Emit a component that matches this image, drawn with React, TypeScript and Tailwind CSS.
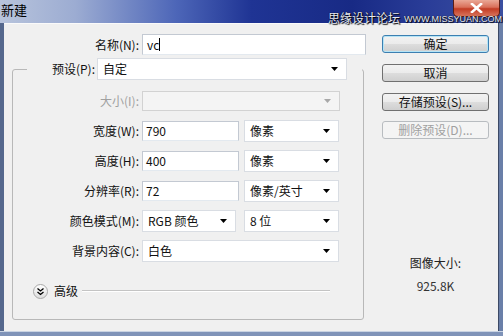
import React from "react";

const Arrow = ({ disabled }: { disabled?: boolean }) => (
  <svg width="7" height="4" viewBox="0 0 7 4">
    <path d="M0 0h7L3.5 4z" fill={disabled ? "#a8a8a8" : "#000"} />
  </svg>
);

const Select = ({ value, w, disabled }: { value?: string; w: string; disabled?: boolean }) => (
  <div
    className={`${w} ${disabled ? "h-[20px] bg-[#f4f4f4] border-[#d2d2d2]" : "h-[22px] bg-white border-[#d9dde3]"} border flex items-center justify-between pl-[5px] pr-[8px]`}
  >
    <span className="leading-none">{value}</span>
    <Arrow disabled={disabled} />
  </div>
);

const Input = ({ value, w }: { value: string; w: string }) => (
  <div className={`${w} h-[20px] bg-white border border-[#c3c9d2] border-b-[#e3e9ef] flex items-center pl-[3px]`}>
    <span className="leading-none">{value}</span>
  </div>
);

const Row = ({ label, disabled, children }: { label: string; disabled?: boolean; children: React.ReactNode }) => (
  <div className="h-[30px] flex items-center">
    <span className={`w-[126px] text-right ${disabled ? "text-[#a0a0a0]" : ""}`}>{label}</span>
    <div className="ml-[3px] flex items-center">{children}</div>
  </div>
);

const Button = ({ children, primary, disabled }: { children: React.ReactNode; primary?: boolean; disabled?: boolean }) => (
  <div
    className={`w-[107px] h-[18px] rounded-[3px] border flex items-center justify-center leading-none ${
      disabled
        ? "border-[#b8bcc0] bg-[#f4f4f4] text-[#a0a0a0]"
        : primary
        ? "border-[#3c7fb1] shadow-[inset_0_0_0_1px_#b5e4f6] bg-[linear-gradient(#f2f2f2_0%,#ebebeb_50%,#dddddd_51%,#cfcfcf_100%)]"
        : "border-[#707070] bg-[linear-gradient(#f2f2f2_0%,#ebebeb_50%,#dddddd_51%,#cfcfcf_100%)]"
    }`}
  >
    {children}
  </div>
);

export default function App() {
  return (
    <div className="w-[503px] h-[336px] overflow-hidden flex flex-col bg-[#5a6d92] text-[12px] text-[#111] font-['Noto_Sans_CJK_SC','Microsoft_YaHei',sans-serif]">
      {/* title bar */}
      <div className="relative h-[23px] shrink-0 flex justify-between items-start bg-[linear-gradient(90deg,#b8c4dc_0%,#9cacd2_15%,#4d66b8_35%,#1f3494_50%,#182a85_70%,#2a3d98_85%,#3b4fa0_100%)]">
        <span className="ml-[1px] mt-[3px] text-[13px] leading-none text-black">新建</span>
        <div className="mr-[3px] w-[47px] h-[17px] rounded-b-[5px] border border-t-0 border-[#5a1e16] bg-[#c9462e] [background-image:linear-gradient(#eaa896_0%,#d9705a_45%,#c23c24_55%,#d8735b_100%)] flex items-center justify-center">
          <svg width="13" height="10" viewBox="0 0 13 10">
            <path d="M2 1l9 8M11 1l-9 8" stroke="#fff" strokeWidth="2.6" strokeLinecap="square" />
          </svg>
        </div>
        <div className="absolute left-[328px] top-[12px] flex items-end gap-[4px] text-[#e8eaf2] [text-shadow:0_0_1px_#000,1px_1px_1px_#000]">
          <span className="text-[12px] leading-none">思缘设计论坛</span>
          <span className="text-[9px] leading-none font-['Liberation_Sans',sans-serif]">WWW.MISSYUAN.COM</span>
        </div>
      </div>

      <div className="flex-1 flex">
        <div className="w-[4px] shrink-0 bg-[#55688d]" />
        <div className="flex-1 flex bg-[#f0f0f0] border-t border-[#fafafa]">
          {/* left column */}
          <div className="w-[362px] pt-[10px]">
            <div className="flex items-center">
              <span className="w-[135px] text-right">名称(N):</span>
              <div className="ml-[3px]">
                <div className="w-[224px] h-[21px] bg-white border border-[#c3c9d2] border-b-[#e3e9ef] flex items-center pl-[4px]">
                  <span className="leading-none">vc</span>
                  <span className="w-px h-[13px] bg-black" />
                </div>
              </div>
            </div>

            <fieldset className="mt-[3px] ml-[8px] w-[352px] border border-[#b8b8b8] rounded-[3px] pb-[13px]">
              <legend className="ml-[14px]">
                <div className="flex items-center pr-[15px]">
                  <span className="w-[68px] text-right">预设(P):</span>
                  <div className="ml-[2px]">
                    <Select value="自定" w="w-[250px]" />
                  </div>
                </div>
              </legend>
              <div className="pt-[6px]">
                <Row label="大小(I):" disabled>
                  <Select w="w-[198px]" disabled />
                </Row>
                <Row label="宽度(W):">
                  <Input value="790" w="w-[97px]" />
                  <div className="ml-[5px]">
                    <Select value="像素" w="w-[95px]" />
                  </div>
                </Row>
                <Row label="高度(H):">
                  <Input value="400" w="w-[97px]" />
                  <div className="ml-[5px]">
                    <Select value="像素" w="w-[95px]" />
                  </div>
                </Row>
                <Row label="分辨率(R):">
                  <Input value="72" w="w-[97px]" />
                  <div className="ml-[5px]">
                    <Select value="像素/英寸" w="w-[95px]" />
                  </div>
                </Row>
                <Row label="颜色模式(M):">
                  <Select value="RGB 颜色" w="w-[94px]" />
                  <div className="ml-[8px]">
                    <Select value="8 位" w="w-[95px]" />
                  </div>
                </Row>
                <Row label="背景内容(C):">
                  <Select value="白色" w="w-[197px]" />
                </Row>
                <div className="mt-[10px] h-[30px] flex items-center">
                  <svg className="ml-[20px]" width="15" height="15" viewBox="0 0 15 15">
                    <defs>
                      <linearGradient id="adv" x1="0" y1="0" x2="0" y2="1">
                        <stop offset="0" stopColor="#ffffff" />
                        <stop offset="1" stopColor="#dcdcdc" />
                      </linearGradient>
                    </defs>
                    <circle cx="7.5" cy="7.5" r="7" fill="url(#adv)" stroke="#a9a9a9" />
                    <path d="M4.5 4.5l3 2.5 3-2.5M4.5 8l3 2.5 3-2.5" fill="none" stroke="#000" strokeWidth="1.3" />
                  </svg>
                  <span className="ml-[6px]">高级</span>
                  <div className="flex-1 ml-[4px] mr-[33px] h-[2px] border-t border-[#c4c4c4] border-b border-b-white" />
                </div>
              </div>
            </fieldset>
          </div>

          {/* right column */}
          <div className="ml-[16px] w-[107px] pt-[11px] flex flex-col">
            <Button primary>确定</Button>
            <div className="mt-[11px]">
              <Button>取消</Button>
            </div>
            <div className="mt-[11px]">
              <Button>存储预设(S)...</Button>
            </div>
            <div className="mt-[10px]">
              <Button disabled>删除预设(D)...</Button>
            </div>
            <div className="mt-[117px] text-center leading-[14px] text-[#222]">图像大小:</div>
            <div className="mt-[9px] text-center leading-[14px] text-[#333]">925.8K</div>
          </div>
        </div>
        <div className="w-[5px] shrink-0 bg-[#6a7fa8] border-l border-[#3c4a66]" />
      </div>
      <div className="h-[5px] shrink-0 bg-[#7f93b8] border-t border-[#c9d3e2]" />
    </div>
  );
}
